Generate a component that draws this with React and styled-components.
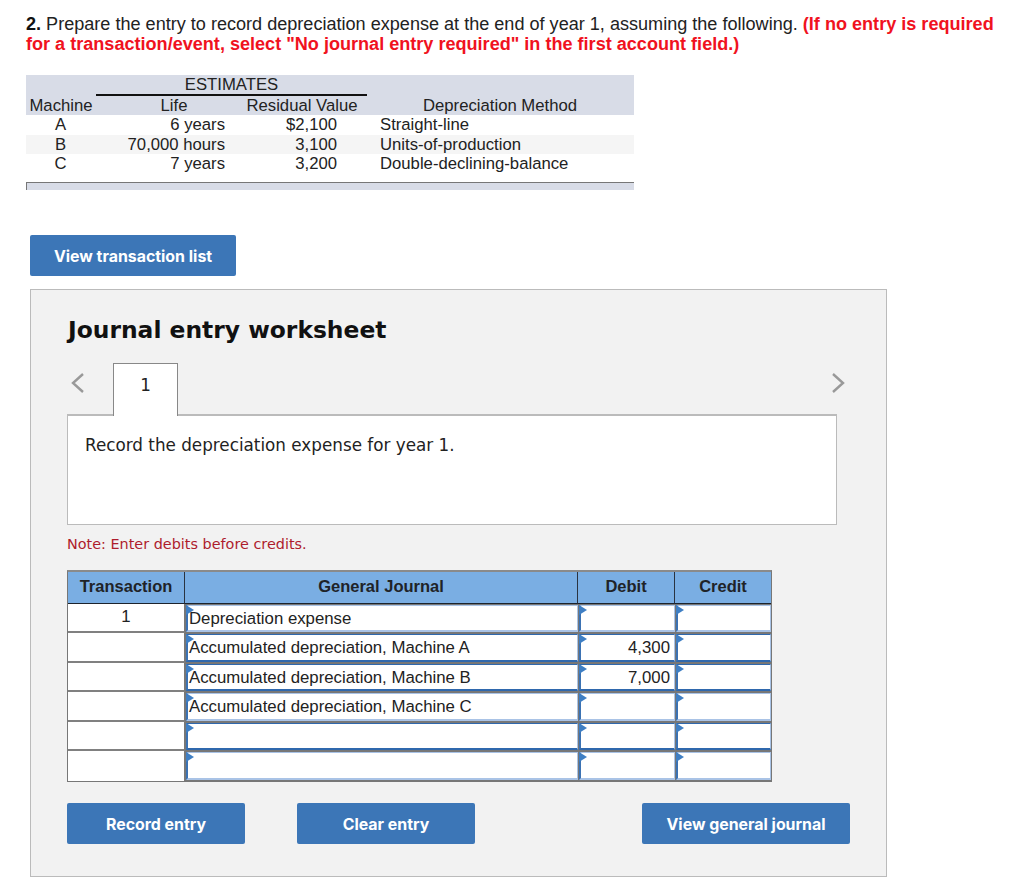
import React from "react";
import styled, { createGlobalStyle } from "styled-components";

const GlobalStyle = createGlobalStyle`
  html, body {
    margin: 0;
    padding: 0;
    background: #fff;
    font-family: "Liberation Sans", Arial, sans-serif;
  }
`;

const Page = styled.div`
  width: 1024px;
  height: 879px;
  overflow: hidden;
  padding: 14px 0 0 26px;
  box-sizing: border-box;
`;

const Question = styled.div`
  width: 975px;
  font-size: 18.08px;
  line-height: 20px;
  color: #222;
  b { color: #111; }
`;

const Warning = styled.strong`
  color: #f0121e;
  font-size: 18.08px;
  font-weight: 700;
`;

const Estimates = styled.div`
  margin-top: 21px;
  width: 608px;
  display: grid;
  grid-template-columns: 70px 150px 112px 276px;
  grid-template-rows: 40px repeat(3, 19.6px);
  font-size: 16.7px;
  line-height: 19.6px;
  color: #222;
  white-space: nowrap;
`;

const HeadBand = styled.div`
  grid-column: 1 / -1;
  display: grid;
  grid-template-columns: inherit;
  grid-auto-rows: 20px;
  background: #d8dce7;
`;

const SpanHead = styled.div`
  grid-column: 2 / 4;
  margin-right: -9px;
  text-align: center;
  border-bottom: 2px solid #111;
  height: 19px;
`;

const HeadCell = styled.div`
  grid-column: ${(p) => p.$col};
  text-align: center;
  padding-top: 1px;
  padding-left: ${(p) => p.$pad || 0}px;
`;

const DataRow = styled.div`
  grid-column: 1 / -1;
  display: grid;
  grid-template-columns: inherit;
  background: ${(p) => (p.$shaded ? "#f5f5f5" : "#fff")};
`;

const MachineCell = styled.div`
  text-align: center;
  padding-right: 1px;
`;

const ValueCell = styled.div`
  text-align: right;
  padding-right: 21px;
`;

const MethodCell = styled.div`
  padding-left: 22px;
`;

const TableFoot = styled.div`
  width: 607px;
  height: 7px;
  margin-top: 8px;
  background: #d8dce7;
  border-top: 1px solid #777;
  border-left: 1px solid #777;
`;

const Button = styled.button`
  width: ${(p) => p.$width}px;
  height: 41px;
  padding: 2px 0 0;
  border: 0;
  border-radius: 2px;
  background: #3c76b7;
  color: #fff;
  font-family: Inter, Roboto, "Liberation Sans", sans-serif;
  font-size: 15.9px;
  font-weight: 700;
`;

const TopAction = styled.div`
  margin: 45px 0 13px 4px;
  line-height: 0;
`;

const Panel = styled.section`
  margin-left: 4px;
  width: 857px;
  height: 588px;
  box-sizing: border-box;
  padding: 25px 36px 0;
  background: #f2f2f2;
  border: 1px solid #bbb;
  font-family: "DejaVu Sans", Verdana, sans-serif;
`;

const Title = styled.h2`
  margin: 0;
  padding-left: 1px;
  font-size: 23.4px;
  line-height: 30px;
  font-weight: 700;
  color: #111;
`;

const TabRow = styled.div`
  margin-top: 18px;
  display: flex;
  align-items: flex-start;
  width: 770px;
`;

const Chevron = styled.svg`
  display: block;
  flex: none;
  margin-top: 9px;
  margin-left: ${(p) => p.$left}px;
`;

const Tab = styled.div`
  position: relative;
  z-index: 1;
  flex: none;
  width: 65px;
  height: 53px;
  margin: 0 0 -2px 28px;
  box-sizing: border-box;
  padding-top: 10px;
  background: #fff;
  border: 1px solid #888;
  border-bottom: 0;
  text-align: center;
  font-size: 16.8px;
  line-height: 22px;
  color: #222;
`;

const Prompt = styled.div`
  width: 770px;
  height: 111px;
  box-sizing: border-box;
  padding: 18px 17px;
  background: #fff;
  border: 1px solid #bbb;
  border-top-width: 2px;
  font-size: 16.8px;
  line-height: 22px;
  color: #222;
`;

const Note = styled.p`
  margin: 10px 0 0;
  font-size: 14.4px;
  line-height: 18px;
  color: #ae1c2c;
`;

const Journal = styled.div`
  margin-top: 17px;
  width: 705px;
  box-sizing: border-box;
  display: grid;
  grid-template-columns: 117px 393px 97px 1fr;
  grid-template-rows: 32px repeat(6, 29.5px);
  background: #777;
  border: 1px solid #777;
  border-top: 2px solid #8a8a8a;
  font-family: "Liberation Sans", Arial, sans-serif;
  font-size: 16.8px;
  color: #222;
`;

const ColHead = styled.div`
  display: flex;
  align-items: center;
  justify-content: center;
  padding-bottom: 1px;
  background: #7aaee3;
  border-right: ${(p) => (p.$last ? 0 : "1px solid #2a3340")};
  border-bottom: 1px solid #1c232c;
  font-size: 16.5px;
  font-weight: 700;
  color: #1f2328;
`;

const RowCell = styled.div`
  display: flex;
  align-items: center;
  justify-content: center;
  background: #fff;
  border-right: 1px solid #777;
  border-bottom: ${(p) => (p.$last ? 0 : "2px solid #808080")};
  padding-bottom: 2px;
`;

const InputCell = styled.div`
  position: relative;
  display: flex;
  align-items: center;
  justify-content: ${(p) => (p.$numeric ? "flex-end" : "flex-start")};
  margin: 1px 0 1px 1px;
  padding: 1px ${(p) => (p.$numeric ? 4 : 0)}px 0 ${(p) => (p.$numeric ? 0 : 1)}px;
  background: #fff;
  border: 1px solid #a9c3e6;
  border-left: 2px solid #3b72b3;
  border-bottom: 2px solid ${(p) => (p.$dark ? "#2f68ad" : "#a9c3e6")};
  border-top-color: ${(p) => (p.$dark ? "#2f68ad" : "#a9c3e6")};
  &::before {
    content: "";
    position: absolute;
    left: -2px;
    top: -1px;
    border-left: 8px solid #3f7fc4;
    border-top: 5px solid transparent;
    border-bottom: 5px solid transparent;
  }
`;

const Actions = styled.div`
  margin-top: 21px;
  width: 783px;
  display: flex;
  line-height: 0;
`;

const SecondAction = styled(Button)`
  margin-left: 52px;
`;

const LastAction = styled(Button)`
  margin-left: auto;
`;

const rows = [
  { account: "Depreciation expense", debit: "", date: "1", dark: false },
  { account: "Accumulated depreciation, Machine A", debit: "4,300", dark: true },
  { account: "Accumulated depreciation, Machine B", debit: "7,000", dark: true },
  { account: "Accumulated depreciation, Machine C", debit: "", dark: false },
  { account: "", debit: "", dark: true },
  { account: "", debit: "", dark: false },
];

function Arrow({ right, left }) {
  return (
    <Chevron $left={left} width="14" height="22" viewBox="0 0 14 22">
      <polyline
        points={right ? "2,2 12,11 2,20" : "12,2 2,11 12,20"}
        fill="none"
        stroke="#999"
        strokeWidth="2.4"
      />
    </Chevron>
  );
}

export default function App() {
  return (
    <Page>
      <GlobalStyle />
      <Question>
        <b>2.</b> Prepare the entry to record depreciation expense at the end of year 1, assuming the
        following. <Warning>(If no entry is required for a transaction/event, select "No journal entry required" in the first account field.)</Warning>
      </Question>

      <Estimates>
        <HeadBand>
          <SpanHead>ESTIMATES</SpanHead>
          <HeadCell $col={1}>Machine</HeadCell>
          <HeadCell $col={2} $pad={6}>Life</HeadCell>
          <HeadCell $col={3}>Residual Value</HeadCell>
          <HeadCell $col={4} $pad={8}>Depreciation Method</HeadCell>
        </HeadBand>
        <DataRow>
          <MachineCell>A</MachineCell>
          <ValueCell>6 years</ValueCell>
          <ValueCell>$2,100</ValueCell>
          <MethodCell>Straight-line</MethodCell>
        </DataRow>
        <DataRow $shaded>
          <MachineCell>B</MachineCell>
          <ValueCell>70,000 hours</ValueCell>
          <ValueCell>3,100</ValueCell>
          <MethodCell>Units-of-production</MethodCell>
        </DataRow>
        <DataRow>
          <MachineCell>C</MachineCell>
          <ValueCell>7 years</ValueCell>
          <ValueCell>3,200</ValueCell>
          <MethodCell>Double-declining-balance</MethodCell>
        </DataRow>
      </Estimates>
      <TableFoot />

      <TopAction>
        <Button $width={206}>View transaction list</Button>
      </TopAction>

      <Panel>
        <Title>Journal entry worksheet</Title>
        <TabRow>
          <Arrow left={4} />
          <Tab>1</Tab>
          <Arrow right left={653} />
        </TabRow>
        <Prompt>Record the depreciation expense for year 1.</Prompt>
        <Note>Note: Enter debits before credits.</Note>

        <Journal>
          <ColHead>Transaction</ColHead>
          <ColHead>General Journal</ColHead>
          <ColHead>Debit</ColHead>
          <ColHead $last>Credit</ColHead>
          {rows.map((row, i) => (
            <React.Fragment key={i}>
              <RowCell $last={i === rows.length - 1}>{row.date}</RowCell>
              <InputCell $dark={row.dark}>{row.account}</InputCell>
              <InputCell $dark={row.dark} $numeric>{row.debit}</InputCell>
              <InputCell $dark={row.dark} $numeric />
            </React.Fragment>
          ))}
        </Journal>

        <Actions>
          <Button $width={178}>Record entry</Button>
          <SecondAction $width={178}>Clear entry</SecondAction>
          <LastAction $width={208}>View general journal</LastAction>
        </Actions>
      </Panel>
    </Page>
  );
}
